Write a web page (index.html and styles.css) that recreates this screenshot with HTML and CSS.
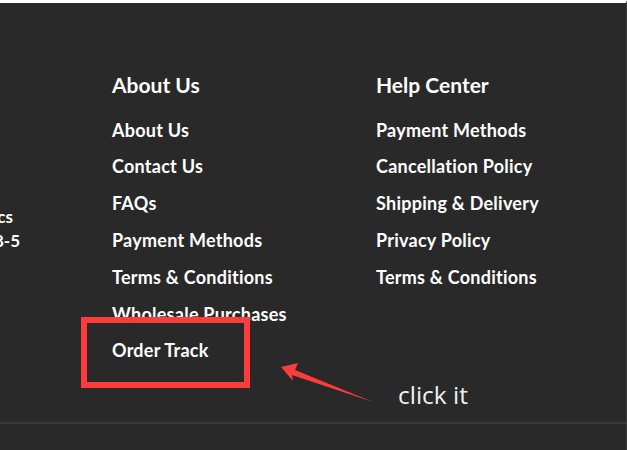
FILE: index.html
```html
<!DOCTYPE html>
<html lang="en">
<head>
  <meta charset="UTF-8" />
  <meta name="viewport" content="width=device-width, initial-scale=1.0"/>
  <title>Footer</title>
  <link rel="stylesheet" href="styles.css">
</head>
<body>
  <div class="page">
    <footer class="footer">
      <div class="columns">
        <div class="col contact">
          <div class="contact-line first">Electronics</div>
          <div class="contact-line">Mon - Fri 8-5</div>
        </div>

        <div class="col about">
          <h3>About Us</h3>
          <ul>
            <li><a href="#">About Us</a></li>
            <li><a href="#">Contact Us</a></li>
            <li><a href="#">FAQs</a></li>
            <li><a href="#">Payment Methods</a></li>
            <li><a href="#">Terms &amp; Conditions</a></li>
            <li><a href="#">Wholesale Purchases</a></li>
            <li class="marked"><a href="#">Order Track</a></li>
          </ul>
        </div>

        <div class="col help">
          <h3>Help Center</h3>
          <ul>
            <li><a href="#">Payment Methods</a></li>
            <li><a href="#">Cancellation Policy</a></li>
            <li><a href="#">Shipping &amp; Delivery</a></li>
            <li><a href="#">Privacy Policy</a></li>
            <li><a href="#">Terms &amp; Conditions</a></li>
          </ul>
        </div>
      </div>

      <div class="footer-bottom"></div>
    </footer>

    <!-- screenshot annotation -->
    <svg class="pointer" width="627" height="450" viewBox="0 0 627 450">
      <polygon points="281,367 298,363 295,370 373,402 292,375 293,381" fill="#ff3b3b"/>
    </svg>
    <span class="note">click it</span>
  </div>
</body>
</html>
```

FILE: styles.css
```css
html, body {
  margin: 0;
  padding: 0;
  background: #292929;
}
body {
  font-family: Lato, 'Liberation Sans', sans-serif;
  color: #fff;
}
.page {
  position: relative;
  width: 627px;
  height: 450px;
  overflow: hidden;
  border-top: 3px solid #fff;
  box-sizing: border-box;
  border-right: 1px solid #3a3a3a;
}
.footer {
  padding-top: 69px;
}
.columns {
  display: flex;
  padding-bottom: 53px;
}
.col {
  flex: none;
}
.contact {
  width: 20px;
  margin-top: 133px;
  font-size: 17px;
  font-weight: 700;
  line-height: 24px;
  white-space: nowrap;
  display: flex;
  flex-direction: column;
  align-items: flex-end;
}
.contact-line.first {
  margin-right: 7px;
}
.about {
  margin-left: 92px;
  width: 264px;
}
h3 {
  font-size: 21px;
  font-weight: 700;
  line-height: 1.2;
  margin: 0 0 14.5px;
}
ul {
  list-style: none;
  margin: 0;
  padding: 0;
}
li {
  font-size: 18px;
  line-height: 36.8px;
  font-weight: 700;
  letter-spacing: 0.25px;
}
li a {
  color: #fff;
  text-decoration: none;
}
.marked {
  position: relative;
}
.marked::after {
  content: "";
  position: absolute;
  left: -31px;
  top: -15.5px;
  width: 157px;
  height: 59px;
  border: 6px solid #ff3b3b;
}
.footer-bottom {
  border-top: 2px solid #3a3a3a;
}
.pointer {
  position: absolute;
  left: 0;
  top: -3px;
  pointer-events: none;
}
.note {
  position: absolute;
  left: 398px;
  top: 375px;
  font-family: 'Open Sans', sans-serif;
  font-size: 24.5px;
  color: #f0f0f0;
}
```
